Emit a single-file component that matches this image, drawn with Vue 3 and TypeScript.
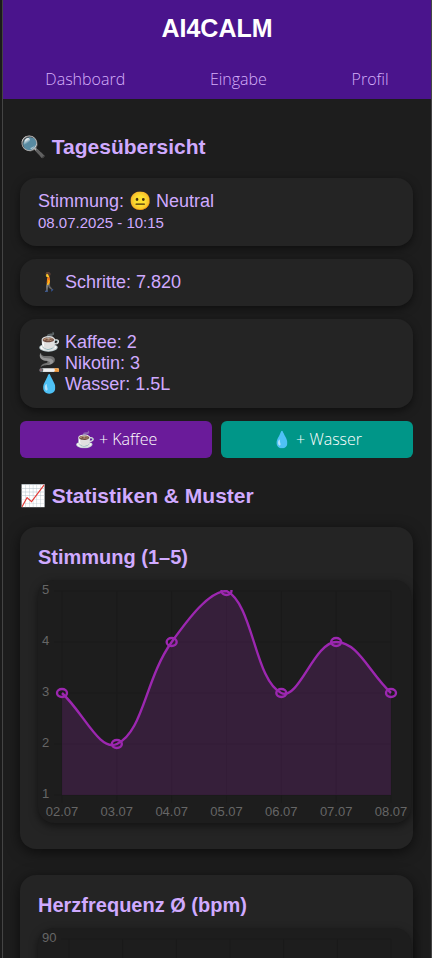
<script setup lang="ts">
interface Point {
  x: number
  y: number
}

interface Chart {
  id: string
  title: string
  columns: number
  dates: string[]
  ticks: string[]
  values: number[]
  min: number
  left: number
}

const AREA = { top: 11, bottom: 215, right: 353 }
const STEP = 51
const TENSION = 0.4

const charts: Chart[] = [
  {
    id: 'mood',
    title: 'Stimmung (1–5)',
    columns: 7,
    dates: ['02.07', '03.07', '04.07', '05.07', '06.07', '07.07', '08.07'],
    ticks: ['5', '4', '3', '2', '1'],
    values: [3, 2, 4, 5, 3, 4, 3],
    min: 1,
    left: 24,
  },
  {
    id: 'heart',
    title: 'Herzfrequenz Ø (bpm)',
    columns: 7,
    dates: [],
    ticks: ['90'],
    values: [],
    min: 60,
    left: 31,
  },
]

const columnX = (chart: Chart, i: number): number =>
  chart.left + (i * (AREA.right - chart.left)) / (chart.columns - 1)

const clampY = (y: number): number => Math.min(AREA.bottom, Math.max(AREA.top, y))

function points(chart: Chart): Point[] {
  return chart.values.map((v, i) => ({
    x: columnX(chart, i),
    y: AREA.bottom - (v - chart.min) * STEP,
  }))
}

/* Cubic spline through the points, its handles kept inside the plot area. */
function linePath(chart: Chart): string {
  const pts = points(chart)
  if (!pts.length) return ''
  const handles = pts.map((p, i) => {
    const prev = pts[i - 1] ?? p
    const next = pts[i + 1] ?? p
    const d1 = Math.hypot(p.x - prev.x, p.y - prev.y)
    const d2 = Math.hypot(next.x - p.x, next.y - p.y)
    const a = (TENSION * d1) / (d1 + d2)
    const b = (TENSION * d2) / (d1 + d2)
    const dx = next.x - prev.x
    const dy = next.y - prev.y
    return {
      inX: p.x - a * dx,
      inY: clampY(p.y - a * dy),
      outX: p.x + b * dx,
      outY: clampY(p.y + b * dy),
    }
  })
  let d = `M${pts[0].x},${pts[0].y}`
  for (let i = 1; i < pts.length; i++) {
    const from = handles[i - 1]
    const to = handles[i]
    d += ` C${from.outX},${from.outY} ${to.inX},${to.inY} ${pts[i].x},${pts[i].y}`
  }
  return d
}

function areaPath(chart: Chart): string {
  const line = linePath(chart)
  return line ? `${line} L${AREA.right},${AREA.bottom} L${chart.left},${AREA.bottom} Z` : ''
}
</script>

<template>
  <div class="app">
    <header class="header">
      <h1>AI4CALM</h1>
      <nav>
        <a href="#dashboard">Dashboard</a>
        <a href="#eingabe">Eingabe</a>
        <a href="#profil">Profil</a>
      </nav>
    </header>

    <main>
      <section>
        <h2>🔍 Tagesübersicht</h2>
        <div class="stack">
          <div class="card">
            <p>Stimmung: 😐 Neutral</p>
            <p class="time">08.07.2025 - 10:15</p>
          </div>
          <div class="card">
            <p>🚶 Schritte: 7.820</p>
          </div>
          <div class="card">
            <p>☕ Kaffee: 2</p>
            <p>🚬 Nikotin: 3</p>
            <p>💧 Wasser: 1.5L</p>
          </div>
          <div class="actions">
            <button type="button" class="coffee">☕ + Kaffee</button>
            <button type="button" class="water">💧 + Wasser</button>
          </div>
        </div>
      </section>

      <section>
        <h2>📈 Statistiken &amp; Muster</h2>
        <div class="charts">
          <article v-for="chart in charts" :key="chart.id" class="card chart-card">
            <h3>{{ chart.title }}</h3>
            <svg class="chart" viewBox="0 0 373 243" role="img" :aria-label="chart.title">
              <clipPath :id="`clip-${chart.id}`">
                <rect x="0" :y="AREA.top - 1" width="373" :height="AREA.bottom - AREA.top + 2" />
              </clipPath>
              <g class="grid">
                <line
                  v-for="n in chart.columns"
                  :key="n"
                  :x1="columnX(chart, n - 1)"
                  :x2="columnX(chart, n - 1)"
                  :y1="AREA.top"
                  :y2="AREA.bottom + 8"
                />
                <line
                  v-for="(tick, i) in chart.ticks"
                  :key="tick"
                  :x1="chart.left - 8"
                  :x2="AREA.right"
                  :y1="AREA.top + i * STEP"
                  :y2="AREA.top + i * STEP"
                />
              </g>
              <g :clip-path="`url(#clip-${chart.id})`">
                <path class="area" :d="areaPath(chart)" />
                <path class="line" :d="linePath(chart)" />
                <ellipse
                  v-for="(p, i) in points(chart)"
                  :key="i"
                  class="dot"
                  :cx="p.x"
                  :cy="p.y"
                  rx="5"
                  ry="4"
                />
              </g>
              <text
                v-for="(tick, i) in chart.ticks"
                :key="tick"
                x="4"
                :y="AREA.top + i * STEP + 3"
              >{{ tick }}</text>
              <text
                v-for="(date, i) in chart.dates"
                :key="date"
                class="date"
                :x="columnX(chart, i)"
                y="236"
              >{{ date }}</text>
            </svg>
          </article>
        </div>
      </section>
    </main>
  </div>
</template>

<style>
html {
  scrollbar-width: none;
}

body {
  background: #1a1a1a;
}
</style>

<style scoped>
.app {
  margin-left: 2px;
  border: solid #444;
  border-width: 0 1px;
  background: #1d1d1d;
  color: #d0aaff;
  font-family: 'Liberation Sans', Arial, sans-serif;
}

h1,
h2,
h3,
p {
  margin: 0;
}

.header {
  background: #4a148c;
  padding: 14px 0 9px;
}

h1 {
  color: #fff;
  font-size: 25px;
  line-height: 28px;
  text-align: center;
}

nav {
  display: flex;
  justify-content: space-around;
  margin-top: 26px;
}

nav a {
  color: #d6b0fa;
  font: 300 16px/22px 'Open Sans', sans-serif;
  text-decoration: none;
}

main {
  padding: 35px 18px 18px 17px;
}

h2 {
  font-size: 21px;
  line-height: 26px;
  margin-bottom: 18px;
}

section + section {
  margin-top: 25px;
}

.stack {
  display: flex;
  flex-direction: column;
  gap: 13px;
}

.card {
  padding: 13px 18px;
  border-radius: 16px;
  background: #242424;
  box-shadow: 0 3px 8px rgba(0, 0, 0, 0.5);
  font-size: 18px;
  line-height: 21px;
}

.card .time {
  font-size: 15px;
}

.actions {
  display: grid;
  grid-template-columns: 1fr 1fr;
  gap: 9px;
}

button {
  padding: 8px;
  border: 0;
  border-radius: 6px;
  color: #fff;
  font: 300 16px/21px 'Open Sans', sans-serif;
}

.coffee {
  background: #6a1b9a;
}

.water {
  background: #009688;
}

.charts {
  display: grid;
  gap: 26px;
}

.chart-card {
  padding: 18px 2px 26px 18px;
  box-shadow: 0 3px 14px rgba(0, 0, 0, 0.6);
}

h3 {
  font-size: 20px;
  line-height: 24px;
  margin-bottom: 11px;
}

.chart {
  display: block;
  width: 100%;
  border-radius: 16px;
  background: #1d1d1d;
  box-shadow: 0 3px 8px rgba(0, 0, 0, 0.5);
}

.chart text {
  fill: #666;
  font-size: 13px;
}

.chart .date {
  text-anchor: middle;
}

.grid {
  stroke: #1a1a1a;
}

.area {
  fill: #9c27b0;
  fill-opacity: 0.2;
}

.line,
.dot {
  fill: none;
  stroke: #9c27b0;
  stroke-width: 2.4;
}
</style>
